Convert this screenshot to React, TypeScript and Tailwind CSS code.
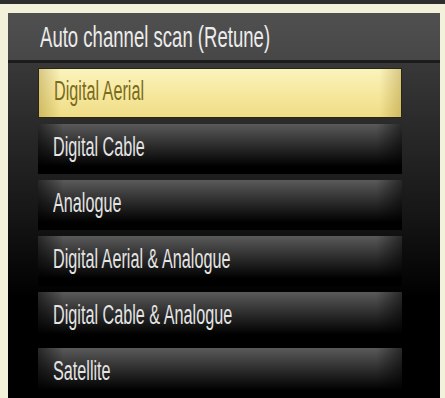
import React from "react";

const options = [
  "Digital Aerial",
  "Digital Cable",
  "Analogue",
  "Digital Aerial & Analogue",
  "Digital Cable & Analogue",
  "Satellite",
];

const App: React.FC = () => {
  const selected = 0;

  return (
    <div className="w-[445px] h-[398px] overflow-hidden bg-[#f4f1da] border-t-4 border-[#2e2e2e] pt-[9px] pl-[8px] pr-[5px] font-['Liberation_Sans',Arial,sans-serif]">
      <div className="h-full flex flex-col bg-black">
        {/* ---------- TITRE ---------- */}
        <div className="h-[50px] shrink-0 flex items-center pl-[32px] bg-[linear-gradient(to_bottom,#505050,#474747)] border-b-[3px] border-[#1c1c1c]">
          <span className="inline-block origin-left scale-x-[0.64] whitespace-nowrap text-[29px] leading-none text-[#ececec] pt-[2px]">
            Auto channel scan (Retune)
          </span>
        </div>

        {/* ---------- LISTE ---------- */}
        <div className="flex-1 flex flex-col gap-[6px] pt-[5px] px-[30px] pr-[38px] bg-[linear-gradient(to_bottom,#383838,#161616_45%,#000_70%)]">
          {options.map((label, i) =>
            i === selected ? (
              <div
                key={label}
                className="h-[50px] shrink-0 flex items-center pl-[15px] pb-[3px] border border-[#2a2612] bg-[linear-gradient(to_right,rgba(150,120,30,0.35),transparent_6%,transparent_94%,rgba(150,120,30,0.35)),linear-gradient(to_bottom,#fbf3bd,#f5e79c_55%,#efdc86)]"
              >
                <span className="inline-block origin-left scale-x-[0.6] whitespace-nowrap text-[27px] leading-none text-[#7a6a1c]">
                  {label}
                </span>
              </div>
            ) : (
              <div
                key={label}
                className="h-[50px] shrink-0 flex items-center pl-[15px] pb-[3px] bg-[linear-gradient(to_right,rgba(0,0,0,0.55),transparent_7%,transparent_93%,rgba(0,0,0,0.55)),linear-gradient(to_bottom,#5a5a5a,#2a2a2a_45%,#000_85%)]"
              >
                <span className="inline-block origin-left scale-x-[0.6] whitespace-nowrap text-[27px] leading-none text-[#e4e4e4]">
                  {label}
                </span>
              </div>
            )
          )}
        </div>
      </div>
    </div>
  );
};

export default App;
